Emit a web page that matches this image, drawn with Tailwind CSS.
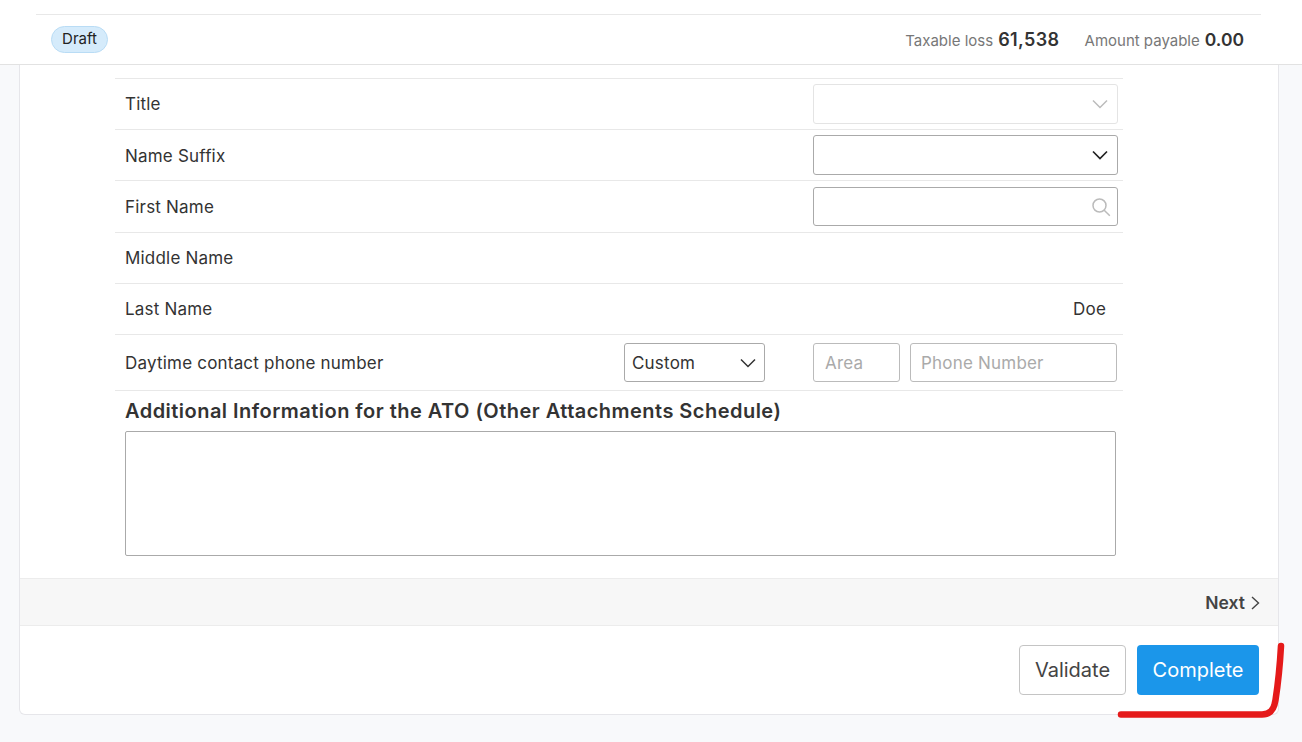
<!DOCTYPE html>
<html lang="en">
<head>
  <meta charset="UTF-8">
  <title>Tax return</title>
  <script src="https://cdn.jsdelivr.net/npm/@tailwindcss/browser@4"></script>
</head>
<body class="relative h-[742px] w-[1302px] overflow-hidden bg-[#f8f9fb] font-['Inter',sans-serif] text-[#333]">
  <!-- top bar -->
  <header class="h-[65px] bg-white border-b border-[#e2e2e2] pt-[14px] pl-[36px] pr-[41px]">
    <div class="flex h-[50px] items-center justify-between border-t border-[#e8e8e8] pl-[15px] pr-[17px]">
      <span class="flex h-[27px] w-[57px] items-center justify-center rounded-full border border-[#b9dcf5] bg-[#d5ebfb] pb-[1px] text-[15px] text-[#222]">Draft</span>
      <div class="flex items-baseline">
        <span class="text-[15px] text-[#777]">Taxable loss</span>
        <span class="ml-[5px] text-[18px] tracking-[0.4px] font-semibold text-[#333]">61,538</span>
        <span class="ml-[25px] text-[15px] text-[#777]">Amount payable</span>
        <span class="ml-[5px] text-[17.5px] font-semibold text-[#333]">0.00</span>
      </div>
    </div>
  </header>

  <main class="ml-[19px] h-[650px] w-[1260px] rounded-b-md border-x border-b border-[#e6e6ea] bg-white">
    <div class="ml-[95px] w-[1008px] pt-[13px] text-[17px] tracking-[0.2px] text-[#333]">
      <div class="flex h-[51px] items-center justify-between border-t border-[#e8e8e8] pl-[10px] pr-[5px]">
        <span class="pt-[2px]">Title</span>
        <div class="flex h-[40px] w-[305px] items-center justify-end rounded-[3px] border border-[#e4e4e4] pr-[9px]">
          <svg class="h-[16px] w-[16px] text-[#bbb]" viewBox="0 0 16 16" fill="none" stroke="currentColor" stroke-width="1.5"><path d="M1 4.5l7 7 7-7"/></svg>
        </div>
      </div>
      <div class="flex h-[51px] items-center justify-between border-t border-[#e8e8e8] pl-[10px] pr-[5px]">
        <span class="pt-[4px]">Name Suffix</span>
        <div class="flex h-[40px] w-[305px] items-center justify-end rounded-[3px] border border-[#aaa] pr-[9px]">
          <svg class="h-[16px] w-[16px] text-[#222]" viewBox="0 0 16 16" fill="none" stroke="currentColor" stroke-width="1.7"><path d="M1 4.5l7 7 7-7"/></svg>
        </div>
      </div>
      <div class="flex h-[52px] items-center justify-between border-t border-[#e8e8e8] pl-[10px] pr-[5px]">
        <span class="pt-[2px]">First Name</span>
        <div class="flex h-[39px] w-[305px] items-center justify-end rounded-[3px] border border-[#aaa] pr-[6px]">
          <svg class="h-[20px] w-[20px] text-[#bbb]" viewBox="0 0 20 20" fill="none" stroke="currentColor" stroke-width="1.5"><circle cx="8.5" cy="8.5" r="6.5"/><path d="M13.2 13.2l5.6 5.6"/></svg>
        </div>
      </div>
      <div class="flex h-[51px] items-center border-t border-[#e8e8e8] pl-[10px]">
        <span class="pt-[2px]">Middle Name</span>
      </div>
      <div class="flex h-[51px] items-center justify-between border-t border-[#e8e8e8] pl-[10px] pr-[17px]">
        <span class="pt-[2px]">Last Name</span>
        <span class="pt-[2px]">Doe</span>
      </div>
      <div class="flex h-[57px] items-center border-t border-b border-[#e8e8e8] pl-[10px]">
        <span class="w-[499px] pt-[2px]">Daytime contact phone number</span>
        <div class="flex h-[39px] w-[141px] items-center justify-between rounded-[3px] border border-[#aaa] pl-[7px] pr-[8px]">
          <span class="pt-[2px]">Custom</span>
          <svg class="h-[16px] w-[16px] text-[#333]" viewBox="0 0 16 16" fill="none" stroke="currentColor" stroke-width="1.5"><path d="M1 4.5l7 7 7-7"/></svg>
        </div>
        <div class="ml-[48px] flex h-[39px] w-[87px] items-center rounded-[3px] border border-[#bbb] pl-[11px] pt-[2px] text-[#aaa]">Area</div>
        <div class="ml-[10px] flex h-[39px] w-[207px] items-center rounded-[3px] border border-[#bbb] pl-[10px] pt-[2px] text-[#aaa]">Phone Number</div>
      </div>
      <h2 class="mt-[8px] pl-[10px] text-[20px] tracking-[0.47px] leading-[24px] font-semibold text-[#333]">Additional Information for the ATO (Other Attachments Schedule)</h2>
      <div class="mt-[8px] ml-[10px] h-[125px] w-[991px] rounded-[2px] border border-[#aaa]"></div>
    </div>

    <div class="mt-[22px] flex h-[48px] items-center justify-end border-y border-[#ececec] bg-[#f7f7f7] pt-[2px] pr-[18px] text-[17.5px] font-semibold text-[#444]">
      Next
      <svg class="ml-[6px] h-[14px] w-[9px] text-[#444]" viewBox="0 0 9 14" fill="none" stroke="currentColor" stroke-width="1.4"><path d="M1 1l6.500 6L1 13"/></svg>
    </div>

    <div class="flex justify-end gap-[11px] pt-[19px] pr-[19px]">
      <button class="h-[50px] w-[107px] rounded-[4px] border border-[#c4c4c4] bg-white text-[20px] text-[#444]">Validate</button>
      <button class="h-[50px] w-[122px] rounded-[4px] bg-[#1b96ea] text-[20px] text-white">Complete</button>
    </div>
  </main>

  <!-- red marker annotation drawn over the screenshot -->
  <svg class="absolute left-0 top-0 pointer-events-none" width="1302" height="742" fill="none">
    <path d="M1121 714.500H1262C1270 714.500 1274 710 1275.500 700C1278 684 1280 664 1281 646" stroke="#e51a1a" stroke-width="6.500" stroke-linecap="round"/>
  </svg>
</body>
</html>
